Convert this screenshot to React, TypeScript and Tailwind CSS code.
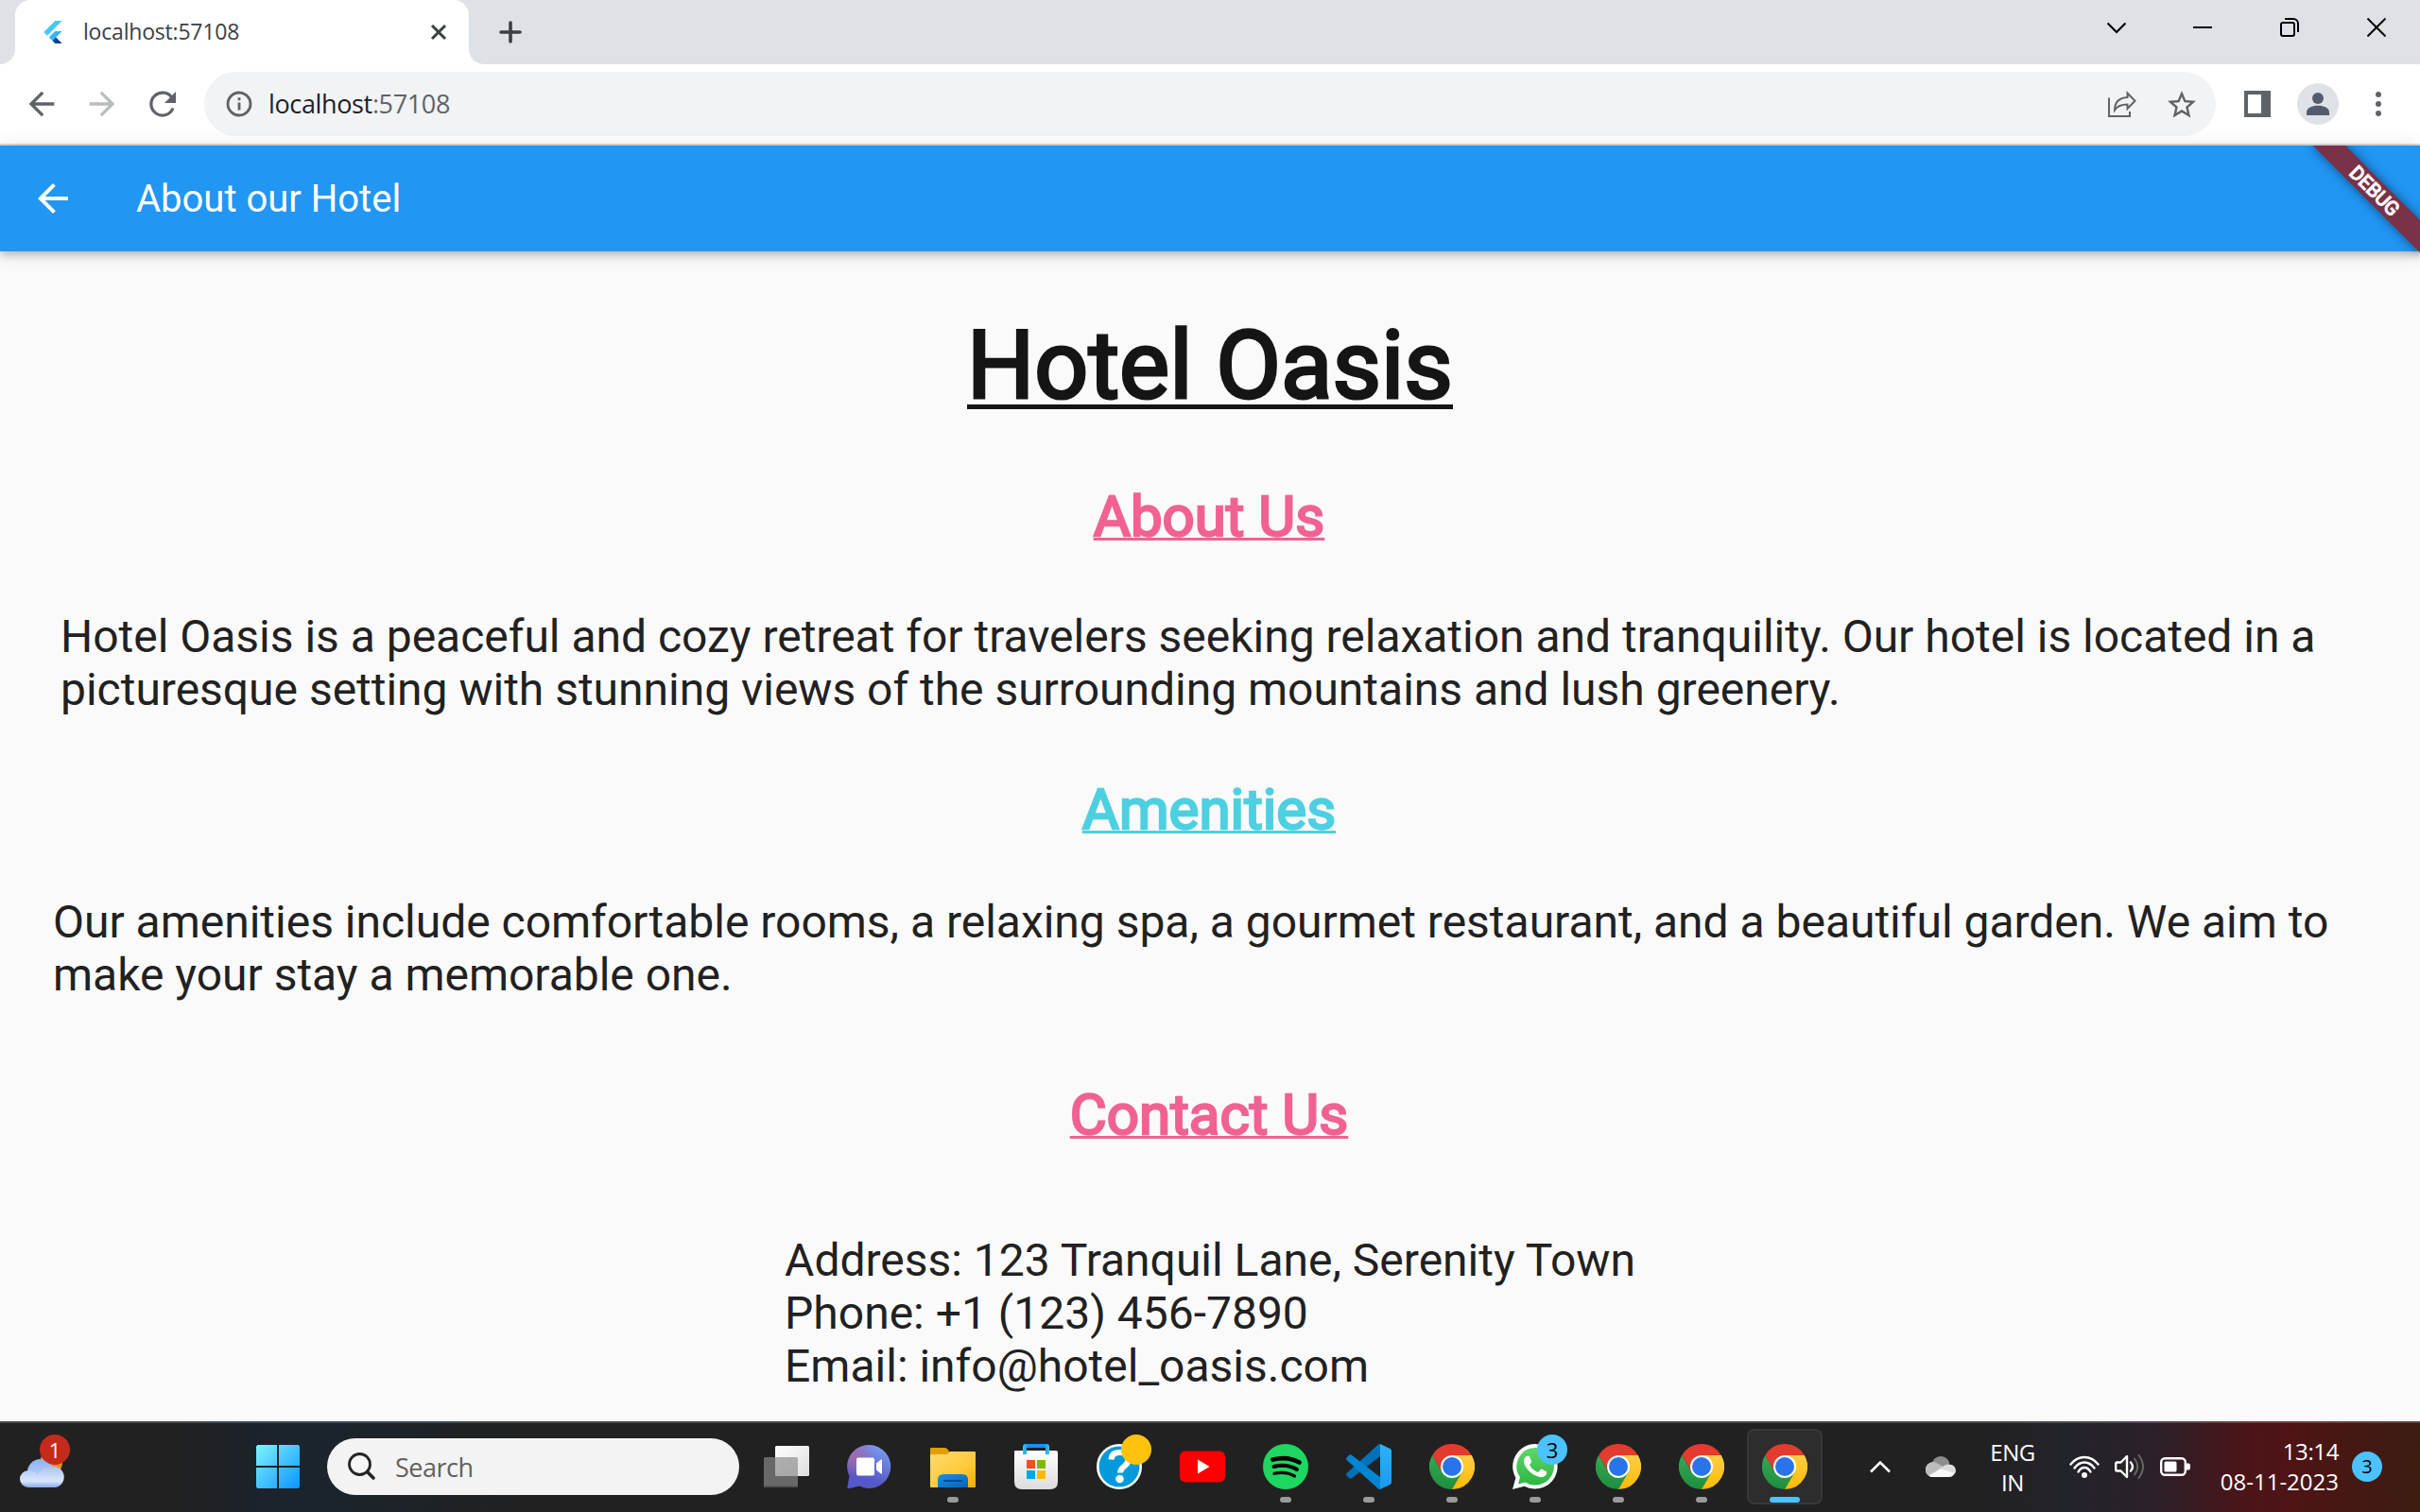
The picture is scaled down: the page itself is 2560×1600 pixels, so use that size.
import type { ReactNode } from "react";

const UI = "font-['Open_Sans',sans-serif]";

/* ---------- browser chrome ---------- */

function TabStrip() {
  return (
    <div className="flex h-[68px] items-stretch bg-[#dee1e6]">
      <div className="w-4 bg-white">
        <div className="h-full rounded-br-2xl bg-[#dee1e6]" />
      </div>
      <div className="flex w-[480px] items-center rounded-t-2xl bg-white pl-[28px] pr-[22px]">
        <svg className="size-6" viewBox="0 0 24 24">
          <path d="M14.3 0 2.3 12 6 15.7 21.7 0z" fill="#45c8fb" />
          <path d="M14.3 11.1 7.9 17.5l3.7 3.7 10.1-10.1z" fill="#2fb7f6" />
          <path d="M11.6 21.2 14.3 24h7.4l-6.5-6.5z" fill="#0b3fa8" />
        </svg>
        <span className={`${UI} ml-5 grow pb-0.5 text-[23px] leading-8 tracking-[-0.2px] text-[#3c4043]`}>
          localhost:57108
        </span>
        <svg className="size-5" viewBox="0 0 20 20">
          <path d="M3 3l14 14M17 3 3 17" stroke="#3c4043" strokeWidth="3" fill="none" />
        </svg>
      </div>
      <div className="w-4 bg-white">
        <div className="h-full rounded-bl-2xl bg-[#dee1e6]" />
      </div>
      <div className="flex grow items-center pl-4">
        <svg className="size-6" viewBox="0 0 24 24">
          <path d="M12 2v20M2 12h20" stroke="#3c4043" strokeWidth="3.6" strokeLinecap="round" />
        </svg>
      </div>
      <div className="flex h-[58px] items-center gap-[72px] pr-9">
        <svg className="-mr-px size-5" viewBox="0 0 20 20">
          <path d="M.5 5.500l9.500 9.500 9.500-9.500" stroke="#000" strokeWidth="2.200" fill="none" />
        </svg>
        <svg className="size-5" viewBox="0 0 20 20">
          <path d="M0 10h20" stroke="#000" strokeWidth="2" />
        </svg>
        <svg className="size-5" viewBox="0 0 20 20">
          <rect x="1" y="5" width="14" height="14" rx="2" stroke="#000" strokeWidth="2" fill="none" />
          <path d="M5 1h9a5 5 0 0 1 5 5v9" stroke="#000" strokeWidth="2" fill="none" />
        </svg>
        <svg className="size-5" viewBox="0 0 20 20">
          <path d="M.5.5l19 19M19.5.5l-19 19" stroke="#000" strokeWidth="2" />
        </svg>
      </div>
    </div>
  );
}

const ARROW = "M20 11H7.83l5.59-5.59L12 4l-8 8 8 8 1.41-1.41L7.83 13H20v-2z";

function Toolbar() {
  return (
    <div className="flex h-[86px] items-center border-b-2 border-[#dadce0] bg-white pl-6 pr-7">
      <div className="flex gap-6">
        <svg className="size-10" viewBox="0 0 24 24" fill="#5f6368">
          <path d={ARROW} />
        </svg>
        <svg className="size-10 rotate-180" viewBox="0 0 24 24" fill="#babcbe">
          <path d={ARROW} />
        </svg>
        <svg className="size-10" viewBox="0 0 40 40">
          <path d="M30.2 14A12 12 0 1 0 31 24.5" stroke="#5f6368" strokeWidth="3.2" fill="none" />
          <path d="M34 7v12H22z" fill="#5f6368" />
        </svg>
      </div>
      <div className="ml-6 flex h-[68px] w-[2128px] items-center rounded-full bg-[#f1f3f4] pl-[23px] pr-[18px]">
        <svg className="size-7" viewBox="0 0 28 28">
          <circle cx="14" cy="14" r="12" stroke="#5f6368" strokeWidth="2.8" fill="none" />
          <path d="M14 12.5v8M14 7.3v3" stroke="#5f6368" strokeWidth="2.8" />
        </svg>
        <span className={`${UI} ml-[17px] grow text-[27px] leading-9 tracking-[-0.36px] text-[#5f6368]`}>
          <span className="text-[#202124]">localhost</span>:57108
        </span>
        <svg className="mr-[30px] h-7 w-[30px]" viewBox="0 0 30 28">
          <path d="M1 7.5V27h22v-5" stroke="#5f6368" strokeWidth="2" fill="none" />
          <path
            d="M20.5 2.5V7C11 7.6 7 13 7 20.500c3-4.500 7.500-6 13.500-6V19l8-8.200z"
            stroke="#5f6368"
            strokeWidth="2"
            fill="none"
          />
        </svg>
        <svg className="mt-px size-9" viewBox="0 0 24 24" fill="#5f6368">
          <path d="M22 9.24l-7.190-.62L12 2 9.190 8.630 2 9.240l5.460 4.730L5.820 21 12 17.270 18.180 21l-1.630-7.030L22 9.240zM12 15.400l-3.760 2.270 1-4.280-3.320-2.880 4.380-.38L12 6.100l1.710 4.040 4.380.38-3.320 2.880 1 4.280L12 15.400z" />
        </svg>
      </div>
      <div className="ml-[30px] flex size-7 bg-[#5f6368] p-1">
        <div className="h-5 w-3.5 bg-white" />
      </div>
      <svg className="ml-7 size-11" viewBox="0 0 44 44">
        <circle cx="22" cy="22" r="22" fill="#dee1e6" />
        <circle cx="22" cy="16" r="6" fill="#525c6f" />
        <path d="M10 34v-3c0-5 6-7.300 12-7.300s12 2.300 12 7.300v3z" fill="#525c6f" />
      </svg>
      <svg className="ml-auto mr-[9px] h-7 w-[14px]" viewBox="0 0 14 28" fill="#5f6368">
        <circle cx="7" cy="4" r="3" />
        <circle cx="7" cy="14" r="3" />
        <circle cx="7" cy="24" r="3" />
      </svg>
    </div>
  );
}

/* ---------- page ---------- */

function AppBar() {
  return (
    <header className="relative z-10 flex h-28 items-center bg-[#2196f3] pl-8 text-white shadow-[0_4px_8px_rgba(0,0,0,0.2),0_2px_20px_rgba(0,0,0,0.12)]">
      <svg className="size-12" viewBox="0 0 24 24" fill="#fff">
        <path d={ARROW} />
      </svg>
      <h1 className="ml-16 pt-0.5 text-[40px] leading-[48px]">About our Hotel</h1>
      <div className="absolute top-0 right-0 size-40 overflow-hidden">
        <div className="absolute top-0 left-full">
          <div className="origin-top-left rotate-45">
            <div className="absolute top-14 -left-20 flex h-6 w-40 items-center justify-center bg-[#7b3147] text-[20.4px] leading-6 shadow-[0_0_12px_rgba(0,0,0,0.5)] [-webkit-text-stroke-width:1.2px]">
              DEBUG
            </div>
          </div>
        </div>
      </div>
    </header>
  );
}

function Heading({ className, children }: { className: string; children: ReactNode }) {
  return (
    <h2
      className={`mr-0.5 self-center text-[60px] leading-[70px] underline decoration-[3px] underline-offset-[2px] [text-decoration-skip-ink:none] [-webkit-text-stroke-width:2.4px] ${className}`}
    >
      {children}
    </h2>
  );
}

function HotelPage() {
  return (
    <div className="flex h-[1350px] flex-col bg-[#fafafa] font-[Roboto,sans-serif] text-[48px] leading-[56px] text-[#212121]">
      <AppBar />
      <main className="flex flex-col pt-[62px]">
        <h2 className="self-center text-[100px] leading-[118px] text-[#151515] underline decoration-[5px] underline-offset-[7px] [text-decoration-skip-ink:none] [-webkit-text-stroke-width:3.2px]">
          Hotel Oasis
        </h2>
        <Heading className="mt-[66px] text-[#f06292]">About Us</Heading>
        <p className="mt-16 ml-16 tracking-[-0.015px]">
          Hotel Oasis is a peaceful and cozy retreat for travelers seeking relaxation and tranquility. Our hotel is
          located in a<br />
          picturesque setting with stunning views of the surrounding mountains and lush greenery.
        </p>
        <Heading className="mt-16 text-[#4dd0e1]">Amenities</Heading>
        <p className="mt-14 ml-14 tracking-[-0.015px]">
          Our amenities include comfortable rooms, a relaxing spa, a gourmet restaurant, and a beautiful garden. We aim
          to
          <br />
          make your stay a memorable one.
        </p>
        <Heading className="mt-[85px] text-[#f06292]">Contact Us</Heading>
        <p className="mt-[91px] self-center">
          Address: 123 Tranquil Lane, Serenity Town
          <br />
          Phone: +1 (123) 456-7890
          <br />
          Email: info@hotel_oasis.com
        </p>
      </main>
    </div>
  );
}

/* ---------- taskbar icons, each on a 48px grid ---------- */

function WeatherIcon() {
  return (
    <svg className="size-12" viewBox="0 0 48 48">
      <defs>
        <linearGradient id="cloudBack" x1="0" y1="0" x2="0" y2="1">
          <stop offset="0" stopColor="#8fb2f4" />
          <stop offset="1" stopColor="#c9dafa" />
        </linearGradient>
        <linearGradient id="cloudFront" x1="0" y1="0" x2="0" y2="1">
          <stop offset="0" stopColor="#a9c3f5" />
          <stop offset="0.7" stopColor="#dbe6fa" />
          <stop offset="1" stopColor="#84a8ec" />
        </linearGradient>
      </defs>
      <circle cx="34" cy="20" r="12" fill="#f58a1a" />
      <circle cx="23" cy="30" r="14" fill="url(#cloudBack)" />
      <path d="M10 46a9 9 0 0 1 0-18c5 0 8 2 10 5 2-4 6-9 14-9a11 11 0 0 1 5 22z" fill="url(#cloudFront)" />
    </svg>
  );
}

function StartIcon() {
  return (
    <svg className="size-[46px]" viewBox="0 0 46 46">
      <defs>
        <linearGradient id="start" x1="0" y1="0" x2="46" y2="46" gradientUnits="userSpaceOnUse">
          <stop offset="0" stopColor="#7df4ff" />
          <stop offset="0.5" stopColor="#45c4ff" />
          <stop offset="1" stopColor="#0a94ff" />
        </linearGradient>
      </defs>
      <path
        d="M1.500 0H22v22H0V1.500zM24 0h20.500L46 1.500V22H24zM0 24h22v22H1.500L0 44.500zM24 24h22v20.500L44.500 46H24z"
        fill="url(#start)"
      />
    </svg>
  );
}

function TaskViewIcon() {
  return (
    <svg className="size-12" viewBox="0 0 48 48">
      <defs>
        <linearGradient id="tv" x1="0" y1="0" x2="1" y2="1">
          <stop offset="0" stopColor="#fff" />
          <stop offset="1" stopColor="#dedede" />
        </linearGradient>
      </defs>
      <rect x="12" y="2" width="36" height="32" rx="1.500" fill="url(#tv)" />
      <rect y="14" width="36" height="32" rx="1.500" fill="#8a8a8a" fillOpacity="0.68" />
      <path d="M0 44.500h36q0 1.500-1.500 1.500h-33Q0 46 0 44.500z" fill="#4c4c4c" />
    </svg>
  );
}

function ChatIcon() {
  return (
    <svg className="size-12" viewBox="1 0 48 48">
      <defs>
        <linearGradient id="chat" x1="0.300" y1="1" x2="0.700" y2="0">
          <stop offset="0.250" stopColor="#5558c9" />
          <stop offset="1" stopColor="#7b9cf0" />
        </linearGradient>
        <radialGradient id="chatGlow" cx="0.150" cy="0.250" r="0.500">
          <stop offset="0" stopColor="#a46aa8" />
          <stop offset="1" stopColor="#a46aa8" stopOpacity="0" />
        </radialGradient>
      </defs>
      <path d="M24 1a23 23 0 1 1-10 43.600L3.500 47Q.8 47.500 1.500 45L3.500 34A23 23 0 0 1 24 1z" fill="url(#chat)" />
      <path d="M24 1a23 23 0 1 1-10 43.600L3.500 47Q.8 47.500 1.500 45L3.500 34A23 23 0 0 1 24 1z" fill="url(#chatGlow)" />
      <rect x="11" y="14.500" width="19" height="19" rx="2" fill="#fff" />
      <path d="M32 20.500l5-4q1-.5 1 .5v14q0 1-1 .5l-5-4z" fill="#fff" />
    </svg>
  );
}

function ExplorerIcon() {
  return (
    <svg className="size-12" viewBox="0 0 48 48">
      <defs>
        <linearGradient id="folder" x1="0" y1="0" x2="1" y2="1">
          <stop offset="0" stopColor="#ffdb6e" />
          <stop offset="0.600" stopColor="#ffca3a" />
          <stop offset="1" stopColor="#f2ac00" />
        </linearGradient>
        <linearGradient id="folderTray" x1="0" y1="0" x2="1" y2="1">
          <stop offset="0" stopColor="#1a92e0" />
          <stop offset="1" stopColor="#0562b8" />
        </linearGradient>
      </defs>
      <path d="M0 5q0-1 1-1h14q3 0 5 4l3 4H0z" fill="#e0a000" />
      <path d="M0 11h18l3-3h26q1 0 1 1v36q0 1-1 1H1q-1 0-1-1z" fill="url(#folder)" />
      <path d="M8 46V38q0-6 6-6h20q6 0 6 6v8z" fill="url(#folderTray)" />
      <path d="M14 39h20" stroke="#0a4c8f" strokeWidth="2" />
    </svg>
  );
}

function StoreIcon() {
  return (
    <svg className="size-12" viewBox="0 0 48 48">
      <defs>
        <linearGradient id="bag" x1="0" y1="0" x2="0" y2="1">
          <stop offset="0" stopColor="#fff" />
          <stop offset="1" stopColor="#dcdcdc" />
        </linearGradient>
        <linearGradient id="handle" x1="0" y1="0" x2="1" y2="0">
          <stop offset="0" stopColor="#35c8f0" />
          <stop offset="0.200" stopColor="#1a8ff0" />
          <stop offset="0.800" stopColor="#1a8ff0" />
          <stop offset="1" stopColor="#35c8f0" />
        </linearGradient>
      </defs>
      <path d="M2 7h43q2 0 2 2v31q0 8-8 8H9q-8 0-8-8V8q0-1 1-1z" fill="url(#bag)" />
      <path d="M10 11V3q0-3 3-3h22q3 0 3 3v8h-4V4H14v7z" fill="url(#handle)" />
      <path d="M14 17h9v9h-9z" fill="#f25022" />
      <path d="M25 17h9v9h-9z" fill="#7fba00" />
      <path d="M14 28h9v9h-9z" fill="#00a4ef" />
      <path d="M25 28h9v9h-9z" fill="#ffb900" />
    </svg>
  );
}

function HelpIcon() {
  return (
    <svg className="size-12" viewBox="0 0 48 48">
      <circle cx="24" cy="24" r="22.700" fill="#0499da" stroke="#fff" strokeWidth="2.600" />
      <path
        d="M15.500 16.500Q16 9 24.500 9q9 0 9 7.500 0 4-4.500 7.500-4 3-4 6.500"
        fill="none"
        stroke="#fff"
        strokeWidth="6"
      />
      <circle cx="24.500" cy="37" r="4.300" fill="#fff" />
    </svg>
  );
}

function YouTubeIcon() {
  return (
    <svg className="size-12" viewBox="0 0 48 48">
      <rect y="7.500" width="48" height="33" rx="6" fill="#f00" />
      <path d="M19 16.500l12.500 7.500L19 31.500z" fill="#fff" />
    </svg>
  );
}

function SpotifyIcon() {
  return (
    <svg className="size-12" viewBox="0 0 48 48">
      <circle cx="24" cy="24" r="24" fill="#1ed760" />
      <g fill="none" stroke="#000" strokeLinecap="round">
        <path d="M10.500 16.500Q26 12.500 38.500 19.500" strokeWidth="4.800" />
        <path d="M11.500 24Q25 20.500 36 27" strokeWidth="4" />
        <path d="M12 31.300Q24 28.500 33.500 34" strokeWidth="3.200" />
      </g>
    </svg>
  );
}

function CodeIcon() {
  return (
    <svg className="size-12" viewBox="0 0 48 48">
      <defs>
        <linearGradient id="codeBar" x1="0" y1="0" x2="0" y2="1">
          <stop offset="0" stopColor="#2bb3f7" />
          <stop offset="1" stopColor="#1c97ee" />
        </linearGradient>
      </defs>
      <path d="M.6 33.500Q-.6 32.500.6 31L33.500 1q1.500-1.300 2.500-1v13L5.500 36.500q-1 .7-2 0z" fill="#0271b8" />
      <path d="M.6 14.500Q-.6 15.500.6 17L33.500 47q1.500 1.300 2.500 1V35L5.500 11.500q-1-.7-2 0z" fill="#0286d4" />
      <path d="M36 0l10.500 5q1.500.8 1.500 2.500v33q0 1.700-1.500 2.500L36 48z" fill="url(#codeBar)" />
    </svg>
  );
}

function ChromeIcon() {
  return (
    <svg className="size-12" viewBox="0 0 48 48">
      <defs>
        <linearGradient id="chromeY" x1="0" y1="0" x2="0" y2="1">
          <stop offset="0" stopColor="#ffcd46" />
          <stop offset="1" stopColor="#fbbc04" />
        </linearGradient>
        <linearGradient id="chromeG" x1="0" y1="0" x2="0" y2="1">
          <stop offset="0" stopColor="#34a853" />
          <stop offset="1" stopColor="#1e8e3e" />
        </linearGradient>
      </defs>
      <path d="M3.200 12A24 24 0 0 1 44.800 12H24v12l-10.400 6z" fill="#e33b2e" />
      <path d="M3.200 12A24 24 0 0 0 24 48l10.400-18L24 24l-10.400 6z" fill="url(#chromeG)" />
      <path d="M44.800 12A24 24 0 0 1 24 48l10.400-18L24 24V12z" fill="url(#chromeY)" />
      <circle cx="24" cy="24" r="12" fill="#fff" />
      <circle cx="24" cy="24" r="10" fill="#2a74ea" />
    </svg>
  );
}

function WhatsAppIcon() {
  return (
    <svg className="size-12" viewBox="0 0 48 48">
      <defs>
        <linearGradient id="wa" x1="0" y1="0" x2="0" y2="1">
          <stop offset="0" stopColor="#5fd769" />
          <stop offset="1" stopColor="#2cb742" />
        </linearGradient>
      </defs>
      <path d="M24 0a23.800 23.800 0 1 1-11.400 44.800L0 48l3.400-12.300A23.800 23.800 0 0 1 24 0z" fill="#fff" />
      <path d="M24 4a19.800 19.800 0 1 1-10.500 36.500L6 42.500l2-7.300A19.800 19.800 0 0 1 24 4z" fill="url(#wa)" />
      <path
        transform="scale(2)"
        fill="#fff"
        d="M17.472 14.382c-.297-.149-1.758-.867-2.030-.967-.273-.099-.471-.148-.670.150-.197.297-.767.966-.940 1.164-.173.199-.347.223-.644.075-.297-.150-1.255-.463-2.390-1.475-.883-.788-1.480-1.761-1.653-2.059-.173-.297-.018-.458.130-.606.134-.133.298-.347.446-.520.149-.174.198-.298.298-.497.099-.198.050-.371-.025-.520-.075-.149-.669-1.612-.916-2.207-.242-.579-.487-.500-.669-.510-.173-.008-.371-.010-.570-.010-.198 0-.520.074-.792.372-.272.297-1.040 1.016-1.040 2.479 0 1.462 1.065 2.875 1.213 3.074.149.198 2.096 3.200 5.077 4.487.709.306 1.262.489 1.694.625.712.227 1.360.195 1.871.118.571-.085 1.758-.719 2.006-1.413.248-.694.248-1.289.173-1.413-.074-.124-.272-.198-.570-.347z"
      />
    </svg>
  );
}

type Item = { icon: ReactNode; state?: "open" | "active"; badge?: ReactNode };

const ITEMS: Item[] = [
  { icon: <TaskViewIcon /> },
  { icon: <ChatIcon /> },
  { icon: <ExplorerIcon />, state: "open" },
  { icon: <StoreIcon /> },
  { icon: <HelpIcon />, badge: <span className="absolute top-[6px] left-[42px] size-8 rounded-full bg-[#ffc20e]" /> },
  { icon: <YouTubeIcon /> },
  { icon: <SpotifyIcon />, state: "open" },
  { icon: <CodeIcon />, state: "open" },
  { icon: <ChromeIcon />, state: "open" },
  {
    icon: <WhatsAppIcon />,
    state: "open",
    badge: (
      <span className="absolute top-[6px] left-[42px] flex size-8 items-center justify-center rounded-full bg-[#4cc2ff] text-[22px] leading-8 text-black">
        3
      </span>
    ),
  },
  { icon: <ChromeIcon />, state: "open" },
  { icon: <ChromeIcon />, state: "open" },
  { icon: <ChromeIcon />, state: "active" },
];

function TaskItem({ icon, state, badge }: Item) {
  return (
    <div
      className={`relative flex size-20 flex-col items-center rounded-lg pt-4 ${
        state === "active" ? "bg-[#2d2d2d] inset-ring-2 inset-ring-[#383838]" : ""
      }`}
    >
      {icon}
      {state === "open" && <div className="mt-2 h-1.5 w-3 rounded-full bg-[#9a9a9a]" />}
      {state === "active" && <div className="mt-2 h-1.5 w-8 rounded-full bg-[#4cc2ff]" />}
      {badge}
    </div>
  );
}

function Tray() {
  return (
    <div className="flex items-center">
      <svg className="h-3.5 w-6" viewBox="0 0 24 14">
        <path d="M2 12.500l10-10 10 10" stroke="#fff" strokeWidth="2.600" fill="none" />
      </svg>
      <svg className="ml-9 h-[22px] w-8" viewBox="0 0 32 22">
        <circle cx="16" cy="9.500" r="9.500" fill="#8d8d8d" />
        <path d="M7 22A8 8 0 1 1 12 7.300L22 13l-9 9z" fill="#bdbdbd" />
        <path d="M3.500 20.500L19 11q2-2 5.500-2a6.500 6.500 0 0 1 .5 13H8q-3 0-4.500-1.500z" fill="#f8f8f8" />
        <path d="M15.500 13.300L19 10.300q3-2 6-1.600a6.500 6.500 0 0 1 6.300 9.300z" fill="#dcdcdc" />
      </svg>
      <div className="ml-9 flex w-12 flex-col items-center pt-px text-2xl leading-8 tracking-[-0.5px]">
        <span>ENG</span>
        <span>IN</span>
      </div>
      <svg className="ml-9 h-6 w-8" viewBox="0 0 32 24">
        <g fill="none" stroke="#fff" strokeWidth="2.400" strokeLinecap="round">
          <path d="M1.500 9.500Q7.500 2 16 2t14.500 7.500" />
          <path d="M5.500 13.500Q10 7.500 16 7.500t10.500 6" />
          <path d="M9.500 17.500Q12 13 16 13t6.500 4.500" />
        </g>
        <circle cx="16" cy="21" r="3" fill="#fff" />
      </svg>
      <svg className="ml-4 h-7 w-8" viewBox="0 0 32 28">
        <path
          d="M2.500 9.500h4L13 3v22l-6.500-6.500h-4q-1.300 0-1.300-1.300v-6.400q0-1.300 1.300-1.300z"
          stroke="#fff"
          strokeWidth="2.400"
          strokeLinejoin="round"
          fill="none"
        />
        <path d="M17 9.500q4 4.500 0 9" stroke="#fff" strokeWidth="2.400" strokeLinecap="round" fill="none" />
        <path d="M21 5.500q6.500 8.500 0 17M25.500 2q9 12 0 24" stroke="#666" strokeWidth="2" strokeLinecap="round" fill="none" />
      </svg>
      <svg className="ml-4 h-5 w-8" viewBox="0 0 32 20">
        <rect x="1.200" y="1.200" width="25.600" height="17.600" rx="4" stroke="#fff" strokeWidth="2.400" fill="none" />
        <rect x="4.500" y="4.500" width="13" height="11" rx="1.500" fill="#fff" />
        <path d="M28 6.500h2q2 0 2 2v3q0 2-2 2h-2z" fill="#fff" />
      </svg>
      <div className="ml-8 flex w-[125px] flex-col items-end text-2xl leading-8">
        <span className="tracking-[-0.4px]">13:14</span>
        <span className="whitespace-nowrap">08-11-2023</span>
      </div>
      <div className="ml-3.5 flex size-8 items-center justify-center rounded-full bg-[#4cc2ff] text-xl leading-8 text-black">
        3
      </div>
    </div>
  );
}

function Taskbar() {
  return (
    <div
      className={`${UI} flex h-24 items-center bg-[linear-gradient(90deg,#212121_0px,#212121_180px,#1b232c_290px,#1c242b_370px,#212121_560px,#212121_2080px,#23232b_2190px,#2b2029_2280px,#4a1519_2370px,#4e1416_2420px,#3c1c12_2560px)] pr-10 text-white shadow-[inset_0_2px_0_rgba(255,255,255,0.17)]`}
    >
      <div className="relative ml-5">
        <WeatherIcon />
        <span className="absolute -top-[10px] left-[22px] flex size-8 items-center justify-center rounded-full bg-[#c42b1c] text-[22px] leading-8">
          1
        </span>
      </div>
      <div className="ml-[203px] flex">
        <StartIcon />
      </div>
      <div className="ml-[29px] flex h-[60px] w-[436px] items-center rounded-full bg-[#f3f3f3] pl-[22px]">
        <svg className="size-[30px]" viewBox="0 0 30 30">
          <circle cx="12.500" cy="12.500" r="11" stroke="#242424" strokeWidth="2.800" fill="#f7f7f7" />
          <path d="M20.500 20.500l6.500 6.500" stroke="#242424" strokeWidth="3.600" strokeLinecap="round" />
        </svg>
        <span className="ml-5 pt-0.5 text-[27px] leading-9 tracking-[-0.5px] text-[#616161]">Search</span>
      </div>
      <div className="ml-2.5 flex gap-2">
        {ITEMS.map((item, i) => (
          <TaskItem key={i} {...item} />
        ))}
      </div>
      <div className="ml-auto">
        <Tray />
      </div>
    </div>
  );
}

export default function App() {
  return (
    <div className="h-[1600px] w-[2560px] overflow-hidden bg-[#fafafa]">
      <TabStrip />
      <Toolbar />
      <HotelPage />
      <Taskbar />
    </div>
  );
}
